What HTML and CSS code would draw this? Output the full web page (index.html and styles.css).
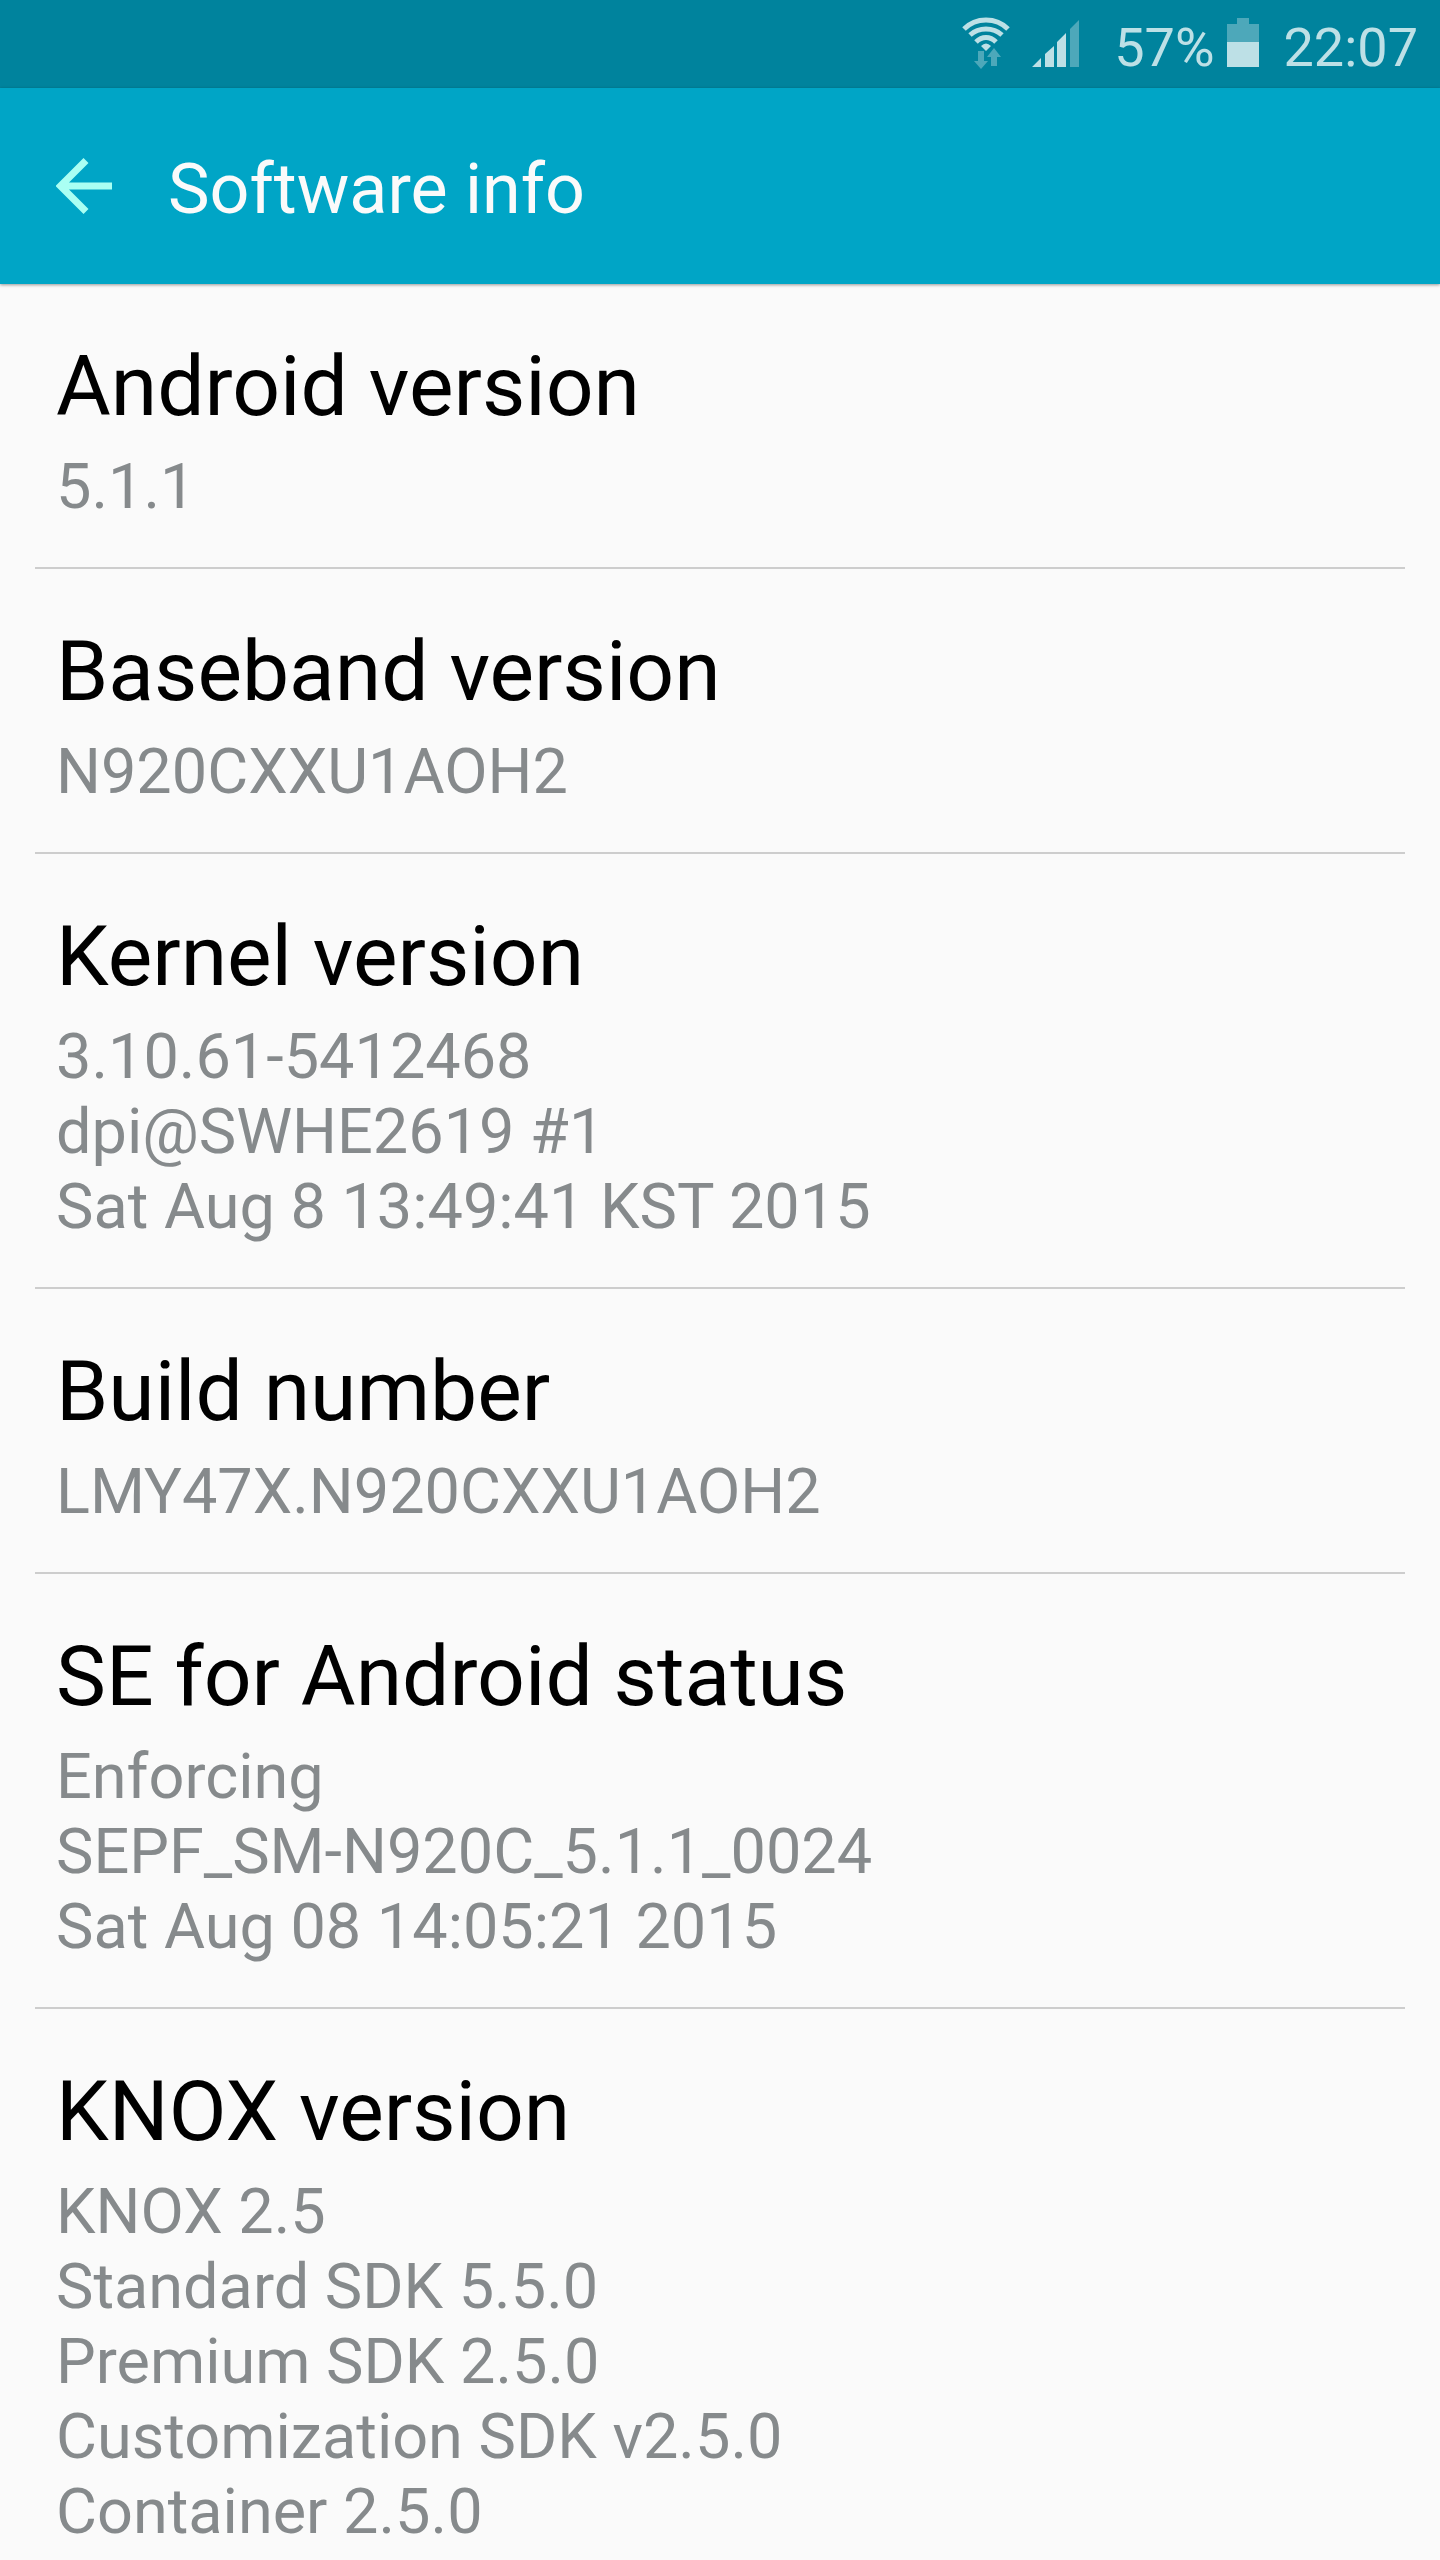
FILE: index.html
```html
<!DOCTYPE html>
<html lang="en">
<head>
<meta charset="utf-8">
<meta name="viewport" content="width=device-width, initial-scale=1">
<title>Software info</title>
<link rel="stylesheet" href="styles.css">
</head>
<body>
<div class="status">
  <svg class="wifi" viewBox="0 0 48 54" width="48" height="54" aria-hidden="true">
    <g fill="none" stroke="#bde0e6" stroke-width="5">
      <path d="M2 12C14 0 34 0 46 12"/>
      <path d="M8 18C17 10 31 10 40 18"/>
      <path d="M14 25C20 19 28 19 34 25"/>
    </g>
    <path fill="#bde0e6" d="M19 29Q24 24 29 29L24 34z"/>
    <path fill="#4da8ba" d="M16 34h6v10h4l-7 8-7-8h4zM29 49V40h-4l7-9 7 9h-4v9z"/>
  </svg>
  <svg class="signal" viewBox="0 0 47 54" width="47" height="54" aria-hidden="true">
    <path fill="#bde0e6" d="M0 50L9 41v9zM13 37l9-8v21h-9zM25 25l9-9v34h-9z"/>
    <path fill="#4da8ba" d="M38 12l9-9v47h-9z"/>
  </svg>
  <span class="percent">57%</span>
  <svg class="battery" viewBox="0 0 32 54" width="32" height="54" aria-hidden="true">
    <path fill="#4da8ba" d="M10 1h12v6h10v18H0V7h10z"/>
    <path fill="#bde0e6" d="M0 25h32v25H0z"/>
  </svg>
  <time class="clock">22:07</time>
</div>
<header class="bar">
  <button class="back" type="button" aria-label="Back">
    <svg viewBox="0 0 56 56" width="56" height="56" aria-hidden="true"><path d="M56 28H8M30 2.500L4.500 28 30 53.500" fill="none" stroke="#aafff3" stroke-width="7"/></svg>
  </button>
  <h1 class="heading">Software info</h1>
</header>
<main class="list">
  <section class="item"><h2 class="name">Android version</h2><p class="value">5.1.1</p></section>
  <section class="item"><h2 class="name">Baseband version</h2><p class="value">N920CXXU1AOH2</p></section>
  <section class="item"><h2 class="name">Kernel version</h2><p class="value">3.10.61-5412468<br>dpi@SWHE2619 #1<br>Sat Aug 8 13:49:41 KST 2015</p></section>
  <section class="item"><h2 class="name">Build number</h2><p class="value">LMY47X.N920CXXU1AOH2</p></section>
  <section class="item"><h2 class="name">SE for Android status</h2><p class="value">Enforcing<br>SEPF_SM-N920C_5.1.1_0024<br>Sat Aug 08 14:05:21 2015</p></section>
  <section class="item"><h2 class="name">KNOX version</h2><p class="value">KNOX 2.5<br>Standard SDK 5.5.0<br>Premium SDK 2.5.0<br>Customization SDK v2.5.0<br>Container 2.5.0</p></section>
</main>
</body>
</html>
```

FILE: styles.css
```css
* { box-sizing: border-box; }
body { margin: 0; background: #fafafa; font-family: Roboto, sans-serif; }
h1, h2, p { margin: 0; font-weight: 400; }
.status { display: flex; align-items: center; justify-content: flex-end; height: 88px; padding-right: 22px; background: #00839d; color: #bde0e6; font-size: 54px; line-height: 66px; }
.percent, .clock { padding-top: 8px; }
.wifi { margin-right: 22px; }
.signal { margin-right: 35px; }
.battery { margin: 0 25px 0 12px; }
.bar { display: flex; align-items: center; gap: 56px; height: 196px; padding: 0 56px; background: #00a5c6; box-shadow: 0 1px 3px rgba(0, 0, 0, 0.4); }
.back { display: flex; padding: 0; border: 0; background: none; }
.heading { padding-top: 6px; color: #fafafa; font-size: 70px; line-height: 84px; }
.list { padding: 0 35px; }
.item { padding: 54px 21px 43px; border-bottom: 2px solid #cdcdcd; }
.item:last-child { border-bottom: 0; padding-bottom: 0; }
.name { color: #000; font-size: 84px; line-height: 98px; }
.value { margin-top: 13px; color: #868a8c; font-size: 63px; line-height: 75px; }
```
